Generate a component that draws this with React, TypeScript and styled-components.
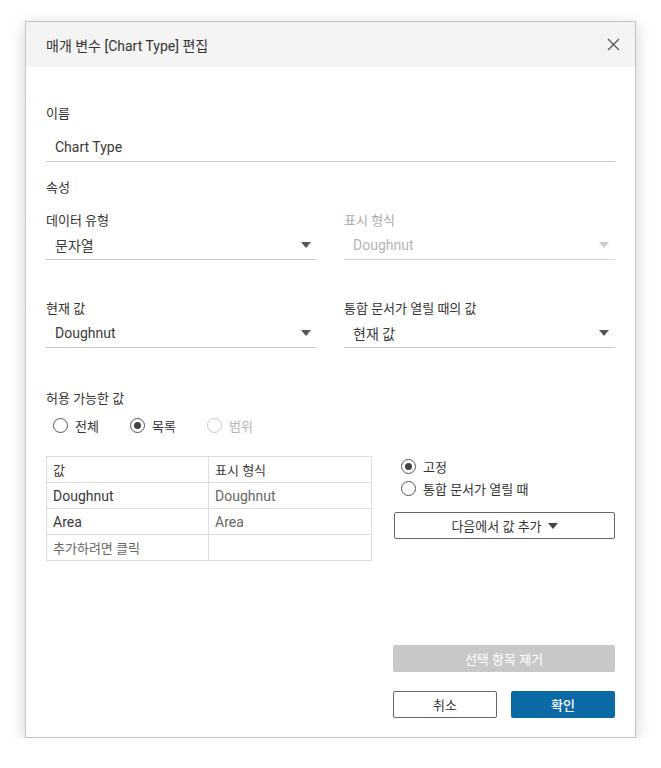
import React from 'react'
import styled, { createGlobalStyle } from 'styled-components'

const GlobalStyle = createGlobalStyle`
  html, body {
    margin: 0;
    padding: 0;
    background: #fff;
  }
  body {
    font-family: Roboto, "Noto Sans CJK KR", sans-serif;
    color: #333;
    font-size: 14px;
  }
`

const Page = styled.div`
  padding: 21px 0 0 25px;
`

const Dialog = styled.div`
  width: 609px;
  height: 715px;
  border: 1px solid #c2c2c2;
  box-shadow: 0 4px 16px rgba(0, 0, 0, 0.18);
  background: #fff;
  display: flex;
  flex-direction: column;
`

const TitleBar = styled.div`
  height: 45px;
  background: #f4f4f4;
  display: flex;
  align-items: center;
  justify-content: space-between;
  padding: 0 14px 0 20px;
`

const Title = styled.div`
  font-size: 14px;
  color: #333;
`

const CloseButton = styled.button`
  border: none;
  background: none;
  padding: 0;
  width: 16px;
  height: 16px;
  display: flex;
  align-items: center;
  justify-content: center;
  cursor: pointer;
`

const Body = styled.div`
  flex: 1;
  display: flex;
  flex-direction: column;
  padding: 37px 20px 19px 20px;
`

const Label = styled.div<{ disabled?: boolean; gap?: number }>`
  line-height: 20px;
  font-size: 13px;
  color: ${({ disabled }) => (disabled ? '#aaa' : '#333')};
  margin-top: ${({ gap }) => gap ?? 0}px;
`

const TextInput = styled.div`
  margin-top: 8px;
  height: 29px;
  border-bottom: 1px solid #c8c8c8;
  padding-left: 9px;
  display: flex;
  align-items: center;
  font-size: 14px;
  color: #3a3a3a;
`

const Columns = styled.div<{ gap: number }>`
  display: grid;
  grid-template-columns: 1fr 1fr;
  column-gap: 27px;
  margin-top: ${({ gap }) => gap}px;
`

const Field = styled.div``

const SelectBox = styled.div<{ disabled?: boolean }>`
  height: 28px;
  border-bottom: 1px solid ${({ disabled }) => (disabled ? '#d6d6d6' : '#c8c8c8')};
  padding: 0 6px 0 9px;
  display: flex;
  align-items: center;
  justify-content: space-between;
  font-size: 14px;
  color: ${({ disabled }) => (disabled ? '#b5b5b5' : '#3a3a3a')};
`

const Caret = styled.span<{ color?: string }>`
  width: 0;
  height: 0;
  border-left: 5px solid transparent;
  border-right: 5px solid transparent;
  border-top: 6px solid ${({ color }) => color ?? '#555'};
`

const RadioRow = styled.div`
  display: flex;
  margin-top: 6px;
  padding-left: 7px;
`

const RadioItem = styled.label<{ disabled?: boolean; width?: number }>`
  display: flex;
  align-items: center;
  height: 20px;
  width: ${({ width }) => (width ? `${width}px` : 'auto')};
  font-size: 13px;
  color: ${({ disabled }) => (disabled ? '#b5b5b5' : '#333')};
  gap: 7px;
`

const RadioCircle = styled.span<{ checked?: boolean; disabled?: boolean }>`
  width: 13px;
  height: 13px;
  border-radius: 50%;
  border: 1px solid ${({ disabled }) => (disabled ? '#c8c8c8' : '#555')};
  display: flex;
  align-items: center;
  justify-content: center;
  flex-shrink: 0;
  &::after {
    content: '';
    display: ${({ checked }) => (checked ? 'block' : 'none')};
    width: 7px;
    height: 7px;
    border-radius: 50%;
    background: #444;
  }
`

const ValuesArea = styled.div`
  margin-top: 21px;
  display: grid;
  grid-template-columns: 326px 1fr;
  column-gap: 22px;
`

const Table = styled.div`
  border: 1px solid #ddd;
  display: grid;
  grid-template-columns: 162px 1fr;
  align-self: start;
`

const Cell = styled.div<{ muted?: boolean; last?: boolean; lastRow?: boolean }>`
  height: 25px;
  display: flex;
  align-items: center;
  padding-left: 6px;
  font-size: 14px;
  color: ${({ muted }) => (muted ? '#666' : '#3a3a3a')};
  border-right: ${({ last }) => (last ? 'none' : '1px solid #ddd')};
  border-bottom: ${({ lastRow }) => (lastRow ? 'none' : '1px solid #ddd')};
`

const HeadCell = styled(Cell)`
  font-size: 13px;
`

const SidePanel = styled.div`
  display: flex;
  flex-direction: column;
`

const SideRadios = styled.div`
  display: flex;
  flex-direction: column;
  gap: 2px;
  padding-left: 7px;
`

const OutlineButton = styled.button<{ width?: string }>`
  height: 27px;
  width: ${({ width }) => width ?? '100%'};
  border: 1px solid #666;
  border-radius: 2px;
  background: #fff;
  color: #333;
  font-family: inherit;
  font-size: 13px;
  display: flex;
  align-items: center;
  justify-content: center;
  gap: 6px;
  padding: 0;
`

const AddButton = styled(OutlineButton)`
  margin-top: 14px;
`

const Spacer = styled.div`
  flex: 1;
`

const Footer = styled.div`
  display: flex;
  flex-direction: column;
  align-items: flex-end;
`

const DisabledButton = styled.button`
  width: 222px;
  height: 27px;
  border: none;
  border-radius: 2px;
  background: #c8c8c8;
  color: #fff;
  font-family: inherit;
  font-size: 13px;
`

const ButtonRow = styled.div`
  display: flex;
  gap: 14px;
  margin-top: 19px;
`

const PrimaryButton = styled.button`
  width: 104px;
  height: 27px;
  border: none;
  border-radius: 2px;
  background: #0b69a3;
  color: #fff;
  font-family: inherit;
  font-size: 13px;
  font-weight: 500;
`

export default function App() {
  return (
    <>
      <GlobalStyle />
      <Page>
        <Dialog>
          <TitleBar>
            <Title>매개 변수 [Chart Type] 편집</Title>
            <CloseButton aria-label="닫기">
              <svg width="13" height="13" viewBox="0 0 13 13">
                <path d="M1 1 L12 12 M12 1 L1 12" stroke="#555" strokeWidth="1.3" fill="none" />
              </svg>
            </CloseButton>
          </TitleBar>
          <Body>
            <Label>이름</Label>
            <TextInput>Chart Type</TextInput>
            <Label gap={16}>속성</Label>

            <Columns gap={13}>
              <Field>
                <Label>데이터 유형</Label>
                <SelectBox>
                  문자열
                  <Caret />
                </SelectBox>
              </Field>
              <Field>
                <Label disabled>표시 형식</Label>
                <SelectBox disabled>
                  Doughnut
                  <Caret color="#ccc" />
                </SelectBox>
              </Field>
            </Columns>

            <Columns gap={39}>
              <Field>
                <Label>현재 값</Label>
                <SelectBox>
                  Doughnut
                  <Caret />
                </SelectBox>
              </Field>
              <Field>
                <Label>통합 문서가 열릴 때의 값</Label>
                <SelectBox>
                  현재 값
                  <Caret />
                </SelectBox>
              </Field>
            </Columns>

            <Label gap={41}>허용 가능한 값</Label>
            <RadioRow>
              <RadioItem width={77}>
                <RadioCircle />
                전체
              </RadioItem>
              <RadioItem width={77}>
                <RadioCircle checked />
                목록
              </RadioItem>
              <RadioItem disabled>
                <RadioCircle disabled />
                범위
              </RadioItem>
            </RadioRow>

            <ValuesArea>
              <Table>
                <HeadCell>값</HeadCell>
                <HeadCell last>표시 형식</HeadCell>
                <Cell>Doughnut</Cell>
                <Cell last muted>Doughnut</Cell>
                <Cell>Area</Cell>
                <Cell last muted>Area</Cell>
                <HeadCell muted lastRow>추가하려면 클릭</HeadCell>
                <Cell last lastRow />
              </Table>
              <SidePanel>
                <SideRadios>
                  <RadioItem>
                    <RadioCircle checked />
                    고정
                  </RadioItem>
                  <RadioItem>
                    <RadioCircle />
                    통합 문서가 열릴 때
                  </RadioItem>
                </SideRadios>
                <AddButton>
                  다음에서 값 추가
                  <Caret color="#444" />
                </AddButton>
              </SidePanel>
            </ValuesArea>

            <Spacer />
            <Footer>
              <DisabledButton disabled>선택 항목 제거</DisabledButton>
              <ButtonRow>
                <OutlineButton width="104px">취소</OutlineButton>
                <PrimaryButton>확인</PrimaryButton>
              </ButtonRow>
            </Footer>
          </Body>
        </Dialog>
      </Page>
    </>
  )
}
